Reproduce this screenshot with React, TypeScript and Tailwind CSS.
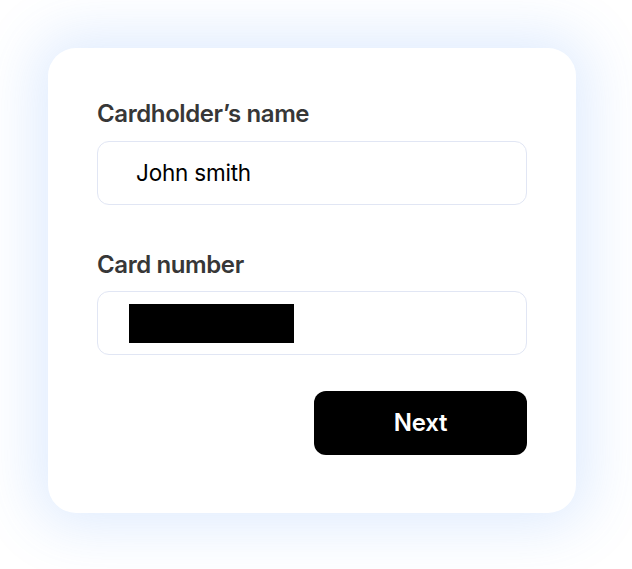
export default function App() {
  return (
    <main
      className="min-h-screen w-full bg-white pl-12 pt-12"
      style={{ fontFamily: "Inter, 'Noto Sans', sans-serif" }}
    >
      <div className="flex w-[528px] flex-col rounded-[28px] bg-white px-[49px] pt-[52px] pb-[58px] shadow-[0_0_56px_14px_rgba(70,140,250,0.17)]">
        <label className="text-[24px] leading-[28px] font-semibold tracking-[-0.4px] text-[#373737]">
          Cardholder’s name
        </label>
        <div className="mt-[13px] flex h-16 items-center rounded-xl border border-[#e1e6f4] pl-[38px]">
          <span className="text-[22.5px] tracking-[-0.2px] text-black">John smith</span>
        </div>

        <label className="mt-[46px] text-[24px] leading-[28px] font-semibold tracking-[-0.4px] text-[#373737]">
          Card number
        </label>
        <div className="mt-3 flex h-16 items-center rounded-xl border border-[#e1e6f4] pl-[31px]">
          <div className="h-[39px] w-[165px] bg-black" />
        </div>

        <div className="mt-9 flex justify-end">
          <button className="flex h-16 w-[213px] items-center justify-center rounded-xl bg-black text-[24px] font-semibold tracking-[-0.2px] text-white">
            Next
          </button>
        </div>
      </div>
    </main>
  );
}
